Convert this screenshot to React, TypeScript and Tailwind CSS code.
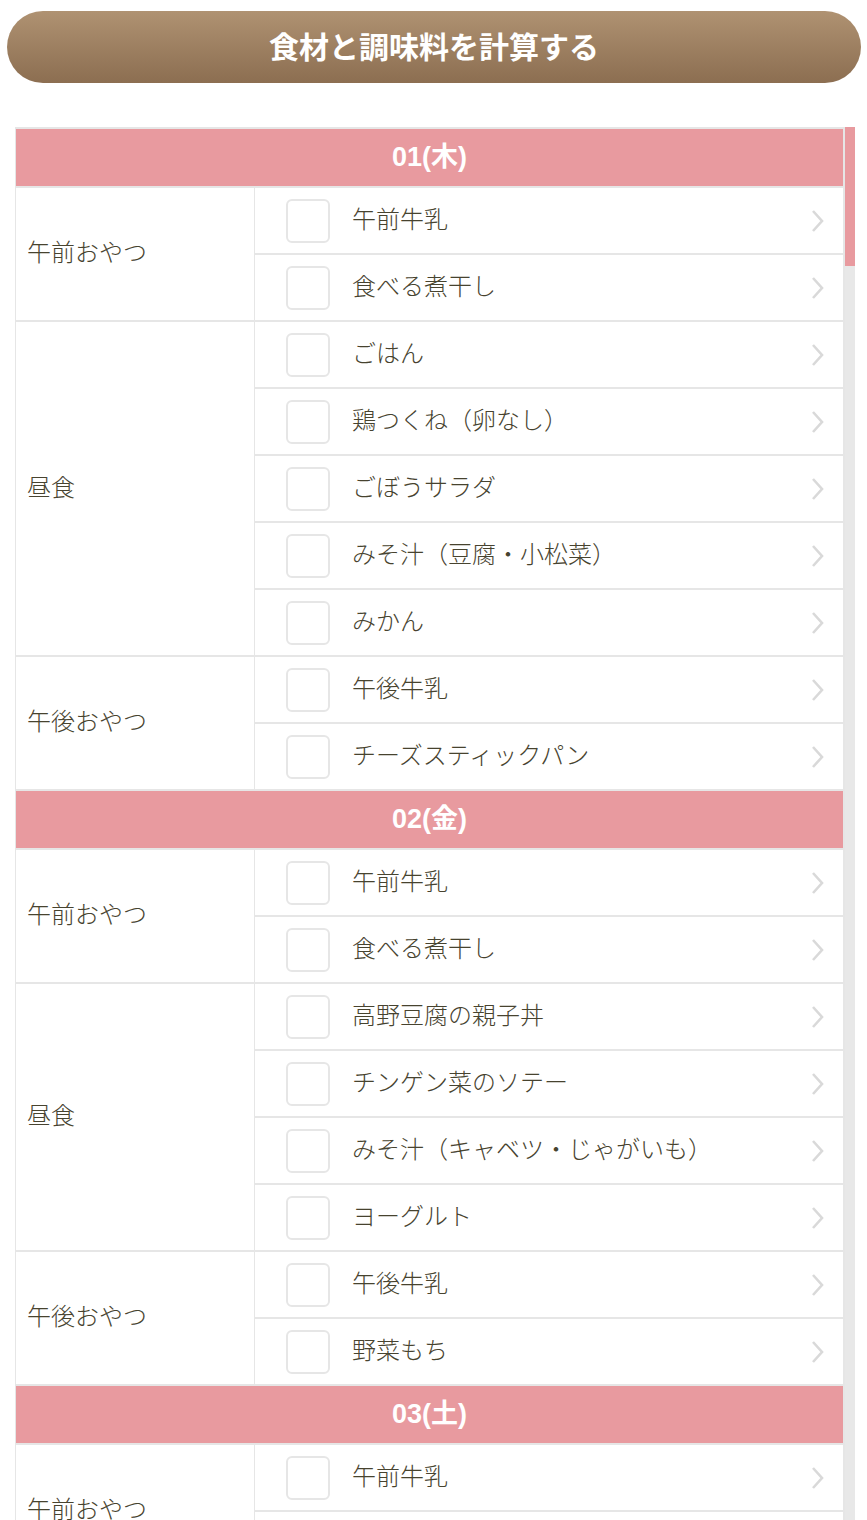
type Group = { label: string; items: string[] };
type Day = { title: string; groups: Group[] };

const days: Day[] = [
  {
    title: '01(木)',
    groups: [
      { label: '午前おやつ', items: ['午前牛乳', '食べる煮干し'] },
      { label: '昼食', items: ['ごはん', '鶏つくね（卵なし）', 'ごぼうサラダ', 'みそ汁（豆腐・小松菜）', 'みかん'] },
      { label: '午後おやつ', items: ['午後牛乳', 'チーズスティックパン'] },
    ],
  },
  {
    title: '02(金)',
    groups: [
      { label: '午前おやつ', items: ['午前牛乳', '食べる煮干し'] },
      { label: '昼食', items: ['高野豆腐の親子丼', 'チンゲン菜のソテー', 'みそ汁（キャベツ・じゃがいも）', 'ヨーグルト'] },
      { label: '午後おやつ', items: ['午後牛乳', '野菜もち'] },
    ],
  },
  {
    title: '03(土)',
    groups: [
      { label: '午前おやつ', items: ['午前牛乳', '食べる煮干し'] },
    ],
  },
];

const jp = { fontFamily: '"Noto Sans CJK JP", "Noto Sans", sans-serif' };
const head = { fontFamily: '"Liberation Sans", "Noto Sans CJK JP", sans-serif' };

function Chevron() {
  return (
    <svg width="14" height="24" viewBox="0 0 14 24" className="mr-[19px] shrink-0">
      <polyline points="3,2 12,12 3,22" fill="none" stroke="#d9d9d9" strokeWidth="2.6" />
    </svg>
  );
}

function ItemRow({ name, first }: { name: string; first: boolean }) {
  return (
    <div className={`h-[65px] flex items-center ${first ? '' : 'border-t-2 border-[#e6e6e6]'} box-content`}>
      <div className="ml-[31px] w-[44px] h-[44px] rounded-[6px] border-2 border-[#e6e6e6] bg-white shrink-0" />
      <div className="ml-[22px] pb-[6px] flex-1 text-[24px] leading-none font-light text-[#47432f] whitespace-nowrap" style={jp}>
        {name}
      </div>
      <Chevron />
    </div>
  );
}

function GroupBlock({ g }: { g: Group }) {
  return (
    <div className="flex border-t-2 border-[#e6e6e6]">
      <div className="w-[239px] shrink-0 border-r border-[#e6e6e6] flex items-center pl-[11px] pb-[6px] text-[24px] leading-none font-light text-[#47432f]" style={jp}>
        {g.label}
      </div>
      <div className="flex-1 flex flex-col">
        {g.items.map((n, i) => (
          <ItemRow key={n + i} name={n} first={i === 0} />
        ))}
      </div>
    </div>
  );
}

export default function App() {
  return (
    <div className="w-[867px] h-[1520px] overflow-hidden bg-white">
      <div className="pt-[11px] pl-[7px] pr-[6px]">
        <button
          type="button"
          className="w-full h-[72px] pb-[4px] rounded-full bg-gradient-to-b from-[#af9272] to-[#8c6e51] text-white text-[30px] font-bold"
          style={jp}
        >
          食材と調味料を計算する
        </button>
      </div>

      <div className="mt-[44px] ml-[15px] w-[840px] flex items-start">
        <div className="flex-1 border-l border-r-2 border-[#e6e6e6]">
          {days.map(d => (
            <div key={d.title}>
              <div
                className="h-[57px] box-content border-t-2 border-[#e6e6e6] bg-[#e89a9f] flex items-center justify-center text-white text-[27px] font-bold"
                style={head}
              >
                {d.title}
              </div>
              {d.groups.map(g => (
                <GroupBlock key={d.title + g.label} g={g} />
              ))}
            </div>
          ))}
        </div>
        <div className="w-[10px] self-stretch bg-[#e8e8e8]">
          <div className="h-[139px] bg-[#e89a9f]" />
        </div>
      </div>
    </div>
  );
}
